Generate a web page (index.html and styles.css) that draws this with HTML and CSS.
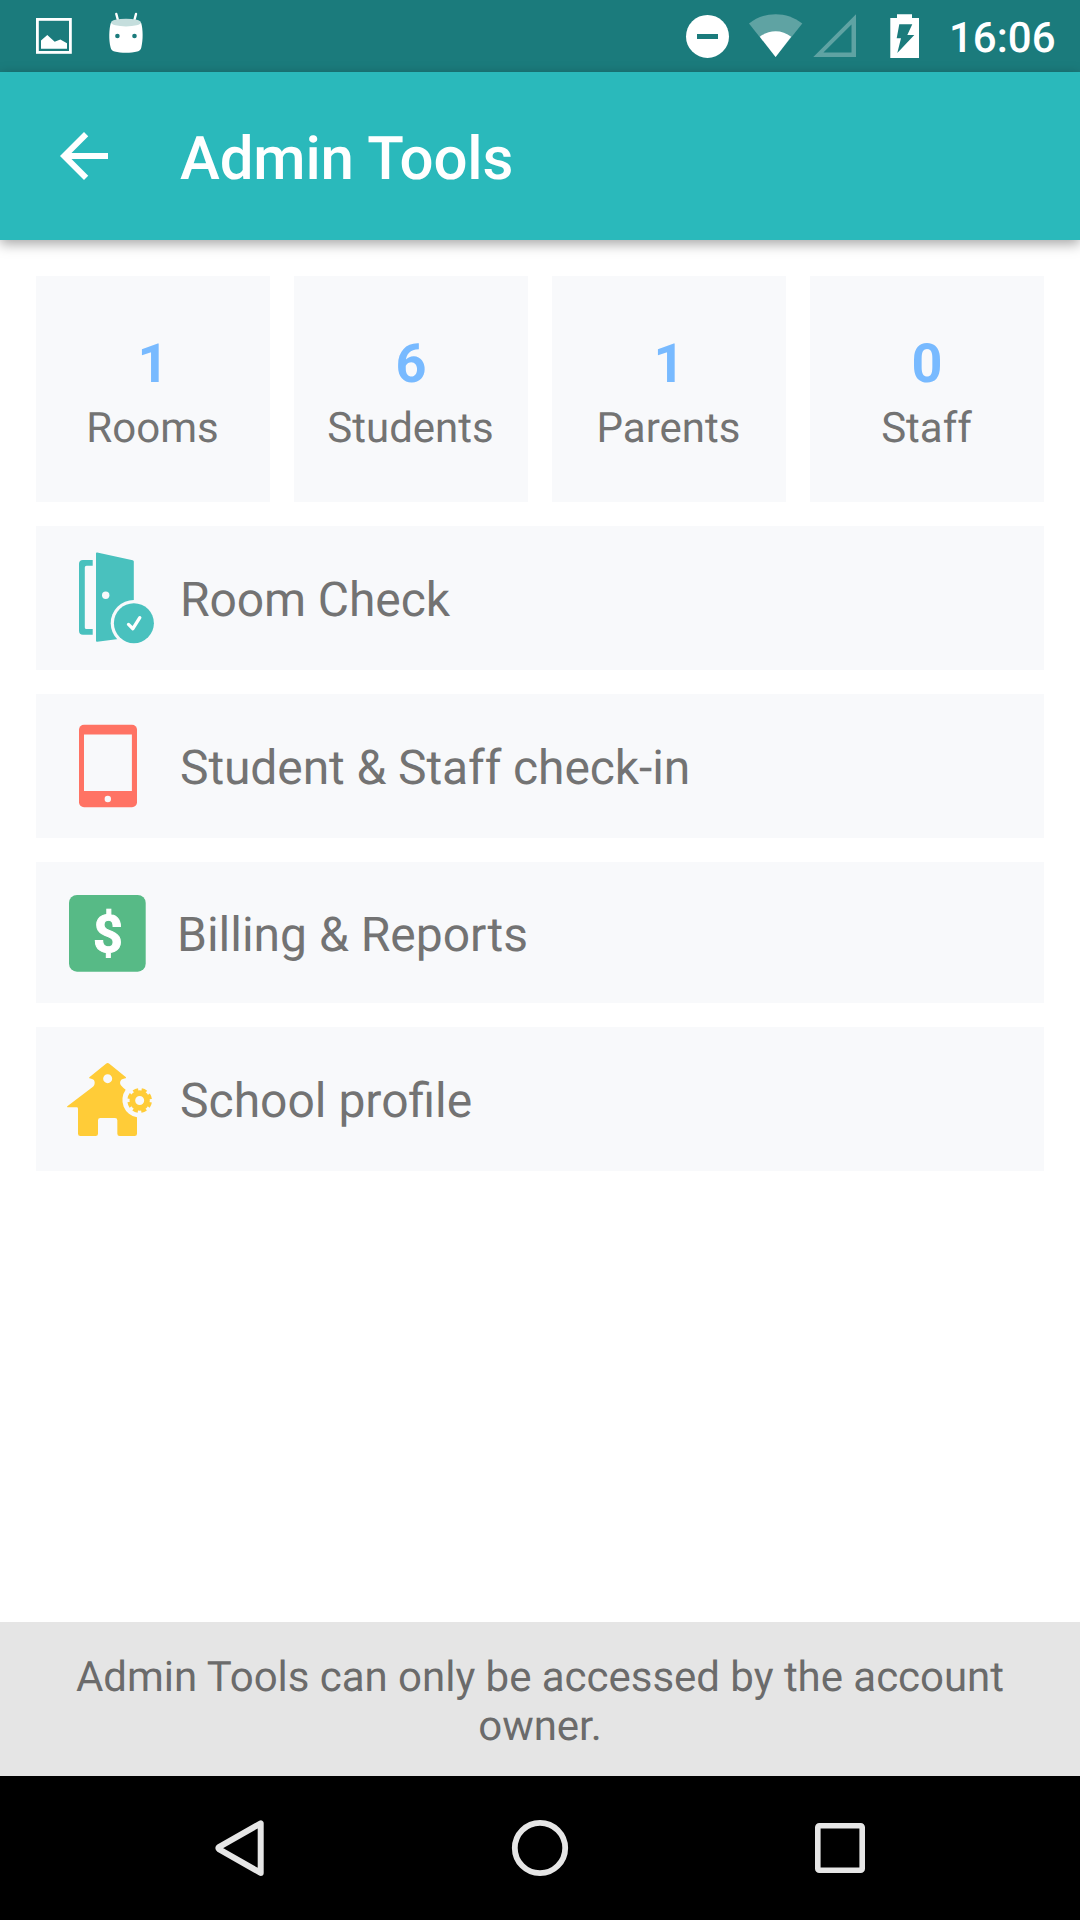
FILE: index.html
```html
<!DOCTYPE html>
<html lang="en">
<head>
<meta charset="utf-8">
<title>Admin Tools</title>
<link rel="stylesheet" href="styles.css">
</head>
<body>
<div class="screen">
  <div class="status-bar">
    <svg class="status-left" viewBox="0 0 180 72" aria-hidden="true">
      <rect x="37.4" y="19.4" width="33" height="33" fill="none" stroke="#fff" stroke-width="2.8"/>
      <path d="M41 48.8V40.5L47.3 35l7.4 6.700 5.600-2.200 6.700 3.800v5.500z" fill="#fff"/>
      <path d="M116.300 14l2 7.500M136 14l-2 7.500" stroke="#fff" stroke-width="2.400" stroke-linecap="round"/>
      <path d="M110.800 23C109 29 108.600 40 110.600 47.500c.5 2.200 1.600 3.300 4 4 6.500 1.700 16.200 1.700 22.700 0 2.400-.7 3.500-1.800 4-4 2-7.500 1.700-18.500-.1-24.500z" fill="#fff"/>
      <ellipse cx="126" cy="22.600" rx="15" ry="3.900" fill="#c5dedd"/>
      <circle cx="117.400" cy="36" r="2.300" fill="#1b7b7c"/>
      <circle cx="134.500" cy="36" r="2.300" fill="#1b7b7c"/>
    </svg>
    <svg class="status-right" viewBox="680 0 250 72" aria-hidden="true">
      <circle cx="707.500" cy="36.400" r="21.500" fill="#fff"/>
      <path d="M697 34h21v5h-21z" fill="#1b7b7c"/>
      <path d="M749 23.500C764.500 11 787 11 802.300 23.500L775.600 57z" fill="#fff" fill-opacity=".3"/>
      <path d="M759.800 36.800C769 29.300 782.300 29.300 791.200 36.800L775.600 57z" fill="#fff"/>
      <path d="M813.300 57L856 14.300V57zM823.400 52.500H851.500V24.400z" fill="#fff" fill-opacity=".3" fill-rule="evenodd"/>
      <path d="M897 18v-3.800h15V18h7v40h-28.700V18zM899.300 24.300l-2.600 14h4.300l-3.700 14.700 17-18h-7l5-10.700z" fill="#fff" fill-rule="evenodd"/>
    </svg>
    <span class="clock">16:06</span>
  </div>

  <header class="toolbar">
    <svg class="back" viewBox="0 0 24 24" aria-hidden="true"><path d="M20 11H7.830l5.590-5.590L12 4l-8 8 8 8 1.410-1.410L7.830 13H20z" fill="#fff"/></svg>
    <h1 class="title">Admin Tools</h1>
  </header>

  <main class="content">
    <section class="stats">
      <div class="stat"><span class="count">1</span><span class="label">Rooms</span></div>
      <div class="stat"><span class="count">6</span><span class="label">Students</span></div>
      <div class="stat"><span class="count">1</span><span class="label">Parents</span></div>
      <div class="stat"><span class="count">0</span><span class="label">Staff</span></div>
    </section>

    <div class="row">
      <svg class="row-icon" viewBox="36 526 144 144" aria-hidden="true">
        <path d="M92.700 560v5.700H86.500q-1.700 0-1.700 1.700v60q0 1.700 1.700 1.700h6.200v5.600H83q-4 0-4-4V564q0-4 4-4z" fill="#49c1be"/>
        <path d="M96 553.500q0-1.200 1.200-.9l35.500 7.600q1.100.3 1.100 1.400V637l-36.600 4.800q-1.200.2-1.200-1z" fill="#49c1be"/>
        <circle cx="105.700" cy="595.300" r="3.700" fill="#f8f9fb"/>
        <circle cx="133.900" cy="623.200" r="23.200" fill="#f8f9fb"/>
        <circle cx="133.900" cy="623.200" r="20" fill="#49c1be"/>
        <path d="M128.500 624.400l4.400 4.300 6.900-11" fill="none" stroke="#fff" stroke-width="3.300" stroke-linecap="round" stroke-linejoin="round"/>
      </svg>
      <span class="row-text tight">Room Check</span>
    </div>
    <div class="row">
      <svg class="row-icon" viewBox="36 694 144 144" aria-hidden="true">
        <rect x="79" y="724.700" width="58" height="82.600" rx="5" fill="#ff7364"/>
        <path d="M84 734.500h47.900v56.500H84z" fill="#f8f9fb"/>
        <circle cx="107.800" cy="799" r="3.200" fill="#f8f9fb"/>
      </svg>
      <span class="row-text tight">Student &amp; Staff check-in</span>
    </div>
    <div class="row row-short">
      <svg class="row-icon" viewBox="36 862 141 141" aria-hidden="true">
        <rect x="69" y="895" width="76.700" height="76.700" rx="8" fill="#57ba86"/>
        <text class="dollar" x="107.800" y="951.500" text-anchor="middle">$</text>
      </svg>
      <span class="row-text">Billing &amp; Reports</span>
    </div>
    <div class="row">
      <svg class="row-icon" viewBox="18 21 432 432" aria-hidden="true">
        <path fill-rule="evenodd" fill="#ffcc38" d="M228 131q5-4 10 0l49 40q3 3 0 4-3 1-8 2c-8 1-12 13-5 20q5 6 13 12A53 53 0 0 0 321 292V341q0 7-7 7H269q-7 0-7-7V301q0-7-7-7H211q-7 0-7 7V341q0 7-7 7H151q-7 0-7-7V266q0-4-4-4H113q-4 0-1-3L188 201c8-5 9-22-2-24q-5-1-8-2-2-1 1-4zM246.500 176a13.500 13.500 0 1 0-27 0 13.500 13.500 0 1 0 27 0z"/>
        <circle cx="329" cy="241.500" r="22" fill="none" stroke="#ffcc38" stroke-width="17"/>
        <circle cx="329" cy="241.500" r="32.500" fill="none" stroke="#ffcc38" stroke-width="9" pathLength="160" stroke-dasharray="12 8" transform="rotate(9 329 241.500)"/>
      </svg>
      <span class="row-text">School profile</span>
    </div>
  </main>

  <footer class="notice">Admin Tools can only be accessed by the account owner.</footer>

  <nav class="nav-bar">
    <svg class="nav-icon" viewBox="0 0 72 72" aria-hidden="true"><path d="M56.700 11.300v49.600L15.300 37.400q-2-1.300 0-2.600z" fill="none" stroke="#e6e6e6" stroke-width="6" stroke-linejoin="round"/></svg>
    <svg class="nav-icon" viewBox="0 0 72 72" aria-hidden="true"><circle cx="36" cy="36" r="25.200" fill="none" stroke="#e6e6e6" stroke-width="5.800"/></svg>
    <svg class="nav-icon" viewBox="0 0 72 72" aria-hidden="true"><rect x="13.800" y="13.800" width="44.400" height="44.400" rx="1.500" fill="none" stroke="#e6e6e6" stroke-width="5.600"/></svg>
  </nav>
</div>
</body>
</html>
```

FILE: styles.css
```css
* { box-sizing: border-box; }

body {
  margin: 0;
  background: #fff;
  font-family: Roboto, "Liberation Sans", sans-serif;
  text-rendering: geometricPrecision;
}

.screen {
  display: flex;
  flex-direction: column;
  width: 1080px;
  height: 1920px;
  overflow: hidden;
}

.status-bar {
  display: flex;
  align-items: center;
  flex: none;
  height: 72px;
  background: #1b7b7c;
  color: #fff;
}
.status-left { width: 180px; height: 72px; }
.status-right { width: 250px; height: 72px; margin-left: auto; }
.clock {
  width: 150px;
  padding-left: 19px;
  padding-top: 6px;
  font-size: 42px;
  font-weight: 500;
  line-height: 50px;
}

.toolbar {
  display: flex;
  align-items: center;
  flex: none;
  height: 168px;
  padding-left: 48px;
  background: #2ab9bb;
  color: #fff;
  box-shadow: 0 4px 12px rgba(0, 0, 0, .35);
}
.back { width: 72px; height: 72px; }
.title {
  margin: 5px 0 0 60px;
  font-size: 60px;
  font-weight: 500;
  letter-spacing: -.15px;
  line-height: 70px;
}

.content {
  display: flex;
  flex: 1;
  flex-direction: column;
  gap: 24px;
  padding: 36px 36px 0;
}
.stats {
  display: grid;
  grid-template-columns: repeat(4, 1fr);
  gap: 24px;
}
.stat {
  display: flex;
  flex-direction: column;
  align-items: center;
  height: 226px;
  padding-top: 57px;
  background: #f8f9fb;
}
.count {
  color: #78baff;
  font-size: 54px;
  font-weight: 700;
  line-height: 64px;
}
.label {
  margin-top: 7px;
  padding-right: 1px;
  color: #737373;
  font-size: 42px;
  line-height: 50px;
}

.row {
  display: flex;
  align-items: center;
  height: 144px;
  background: #f8f9fb;
}
.row-short { height: 141px; }
.row-icon { width: 144px; height: 144px; }
.row-short .row-icon { width: 141px; height: 141px; }
.row-text {
  padding-top: 4px;
  color: #737373;
  font-size: 48px;
  line-height: 56px;
  white-space: nowrap;
}
.tight { letter-spacing: -.1px; }
.dollar {
  fill: #fff;
  stroke: #fff;
  stroke-width: 1;
  font-size: 52px;
  font-weight: 700;
}

.notice {
  flex: none;
  height: 154px;
  padding: 31px 48px 0;
  background: #e5e5e5;
  color: #6b6b6b;
  font-size: 42px;
  letter-spacing: -.03px;
  line-height: 49px;
  text-align: center;
}

.nav-bar {
  display: flex;
  align-items: center;
  justify-content: space-between;
  flex: none;
  height: 144px;
  padding: 0 204px;
  background: #000;
}
.nav-icon { width: 72px; height: 72px; }
```
